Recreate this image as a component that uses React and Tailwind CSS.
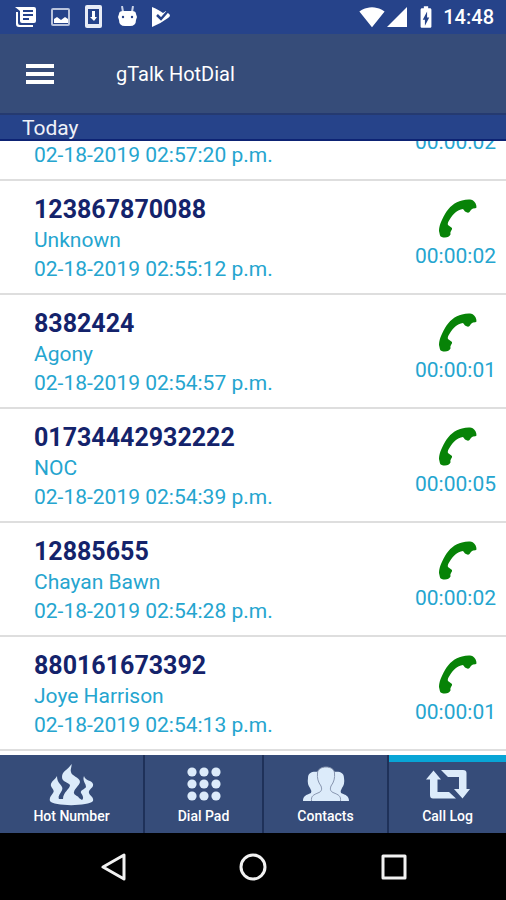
import React from 'react';
import {
    MdBatteryChargingFull,
    MdSignalCellular4Bar,
    MdSignalWifi4Bar,
} from 'react-icons/md';

const calls = [
    { id: 1, number: '', name: '', time: '02-18-2019 02:57:20 p.m.', duration: '00:00:02' },
    { id: 2, number: '123867870088', name: 'Unknown', time: '02-18-2019 02:55:12 p.m.', duration: '00:00:02' },
    { id: 3, number: '8382424', name: 'Agony', time: '02-18-2019 02:54:57 p.m.', duration: '00:00:01' },
    { id: 4, number: '01734442932222', name: 'NOC', time: '02-18-2019 02:54:39 p.m.', duration: '00:00:05' },
    { id: 5, number: '12885655', name: 'Chayan Bawn', time: '02-18-2019 02:54:28 p.m.', duration: '00:00:02' },
    { id: 6, number: '880161673392', name: 'Joye Harrison', time: '02-18-2019 02:54:13 p.m.', duration: '00:00:01' },
];

const NewsIcon = () => (
    <svg viewBox="0 0 22 22" className="h-[22px] w-[22px]" fill="currentColor">
        <path fillRule="evenodd" d="M0 1h19a2 2 0 0 1 2 2v12a2 2 0 0 1-2 2H7a2 2 0 0 1-2-2V5zM8 4v2h10V4zM8 8v2h10V8zM8 12v2h6v-2z" />
        <path d="M1 6h2v11a2 2 0 0 0 2 2h13v2H4a3 3 0 0 1-3-3z" />
    </svg>
);

const ImageIcon = () => (
    <svg viewBox="0 0 20 20" className="h-5 w-5">
        <rect x="1" y="2" width="17" height="16" rx="1" fill="none" stroke="#b9c3dc" strokeWidth="2" />
        <path d="M3 16v-4l3-2 4 3 4-3 3 2v4z" fill="#fff" />
    </svg>
);

const UpdateIcon = () => (
    <svg viewBox="0 0 18 24" className="h-6 w-[18px]">
        <rect x="0" y="0" width="17" height="23" rx="2" fill="#e8ecf6" />
        <rect x="3" y="4" width="11" height="15" fill="#26438a" />
        <path d="M7 6h3v6h2l-3 4-4-4h2z" fill="#fff" />
    </svg>
);

const AndroidIcon = () => (
    <svg viewBox="0 0 20 22" className="h-[22px] w-5">
        <path d="M5 0l1 6M16 0l-1 6" stroke="#c9d2e8" strokeWidth="2" />
        <path d="M2 8q0-3 4-3h9q4 0 4 3l1 3-1 3q0 6-6 6H8q-6 0-6-6l-1-3z" fill="#fff" />
        <circle cx="6" cy="11" r="1.2" fill="#26438a" />
        <circle cx="15" cy="11" r="1.2" fill="#26438a" />
    </svg>
);

const PlayCheckIcon = () => (
    <svg viewBox="0 0 20 22" className="h-[22px] w-5">
        <path d="M1 1q3 1 8 4l3 2 3-2 4 4q0 2-2 3Q9 18 1 21z" fill="#fff" />
        <path d="M6 9l4 4 7-8" fill="none" stroke="#26438a" strokeWidth="2.500" />
    </svg>
);

const PhoneIcon = () => (
    <svg viewBox="0 0 42 40" className="h-10 w-[42px]" fill="#078307">
        <path d="M4 32C4 27 6 22 10 15C14 8 20 3 27 1.500C31 .5 36 0 38 1.500C40 3 41.500 5 41.500 8.500Q41 9.500 38 9.500Q36 10 34.500 13Q33 14.500 30 12.500L28 10C22 11 18 15 15 20Q12 24 13 26L17 29Q17.500 30 16 32Q15 33 15.500 35.500Q14 38.500 10 38.500Q6 38.500 5 36.500Z" />
    </svg>
);

const FlameIcon = () => (
    <svg viewBox="0 0 46 44" className="h-11 w-[46px]" fill="#dcebfa">
        <path d="M22.500 2C19 8 13 9 13 15C13 20 19 20 21 23C21 27 14 30 14 37L10 37C8 33 15 29 13 25C12 22 8 21 8 14C6 18 1 20 2 24C3 27 6 28 4 31C2 34 0 36 1 39C4 44.500 40 44.500 44 39C45 35 41 34 40 31C39 27 45 26 44 22C43 18 36 19 35 14C33 19 37 21 37 25C35 28 31 28 32 31C34 34 35 36 33 38L30 36C30 34 24 33 25 30C26 26 30 24 31 20C31 15 22 14 22 10C21 7 23 5 22.500 2Z" />
    </svg>
);

const DialPadIcon = () => (
    <svg viewBox="0 0 36 44" className="h-11 w-9" fill="#dcebfa">
        {[10, 22, 34].map((cy) =>
            [6, 18, 30].map((cx) => <circle key={`${cx}-${cy}`} cx={cx} cy={cy} r="4.600" />)
        )}
    </svg>
);

const ContactsIcon = () => (
    <svg viewBox="0 0 46 44" className="h-11 w-[46px]" fill="#dcebfa">
        <path d="M0 39C0 34 3 33 8 31Q9 29 7 26Q4 22 5 16C5 10 10 9 16 10L23 39Z" />
        <path d="M46 39C46 34 43 33 38 31Q37 29 39 26Q42 22 41 16C41 10 36 9 30 10L23 39Z" />
        <path
            d="M8.500 39C8 34 10 33 16 30.500C19 29 19 27 18 24C15 20 14 16 14.500 11C15 3 31 3 31.500 11C32 16 31 20 28 24C27 27 27 29 30 30.500C36 33 38 34 37.500 39"
            stroke="#8795af"
        />
    </svg>
);

const CallLogIcon = () => (
    <svg viewBox="0 0 44 44" className="h-11 w-11" fill="#dcebfa">
        <path d="M7.500 8.500L15 17.500H11.500V30H23L30 36.500H7Q4 36.500 4 33V17.500H0Z" />
        <path d="M15 8H37Q40.500 8 40.500 11V27H44L36.500 36.500L28 27H33V15H22Z" />
    </svg>
);

const tabs = [
    { label: 'Hot Number', icon: FlameIcon },
    { label: 'Dial Pad', icon: DialPadIcon },
    { label: 'Contacts', icon: ContactsIcon },
    { label: 'Call Log', icon: CallLogIcon, active: true },
];

const StatusBar = () => (
    <div className="flex h-[34px] shrink-0 items-center justify-between bg-[#26438a] pr-3 pl-[15px] text-white">
        <div className="flex items-center gap-[14px]">
            <NewsIcon />
            <ImageIcon />
            <UpdateIcon />
            <AndroidIcon />
            <PlayCheckIcon />
        </div>
        <div className="flex items-center">
            <MdSignalWifi4Bar className="h-[26px] w-[26px]" />
            <MdSignalCellular4Bar className="h-6 w-6" />
            <MdBatteryChargingFull className="ml-1 h-[26px] w-[26px]" />
            <span className="ml-1 text-[20px] leading-6 font-medium">14:48</span>
        </div>
    </div>
);

const CallRow = ({ call }) => (
    <li className="flex h-[114px] items-start justify-between border-b-2 border-[#dedede] pr-[10px] pl-[34px]">
        <div className="pt-[13px] text-[21px] text-[#25a5cf]">
            <p className="h-8 text-[25px] leading-8 font-bold text-[#14236b]">{call.number}</p>
            <p className="h-[29px] leading-[29px]">{call.name}</p>
            <p className="h-[29px] leading-[29px]">{call.time}</p>
        </div>
        <div className="flex flex-col items-center pt-[18px]">
            <PhoneIcon />
            <p className="text-[21px] leading-[34px] text-[#25a5cf]">{call.duration}</p>
        </div>
    </li>
);

const App = () => {
    return (
        <div className="flex h-screen flex-col overflow-hidden bg-white font-['Roboto',sans-serif]">
            <StatusBar />

            <header className="flex h-[79px] shrink-0 items-center bg-[#364c79] px-[26px] text-white">
                <button type="button" aria-label="Menu" className="flex w-7 flex-col gap-1">
                    <span className="h-1 w-full bg-white" />
                    <span className="h-1 w-full bg-white" />
                    <span className="h-1 w-full bg-white" />
                </button>
                <h1 className="ml-[62px] text-[20px] leading-6">gTalk HotDial</h1>
            </header>

            <h2 className="h-7 shrink-0 border-t-2 border-b-2 border-t-[#253a70] border-b-[#0d2374] bg-[#26438a] pl-[22px] text-[21px] leading-[26px] text-[#eef1f8]">
                Today
            </h2>

            <main className="min-h-0 flex-1 overflow-hidden">
                {/* list is scrolled part way into the first call */}
                <ul className="-mt-[74px]">
                    {calls.map((call) => (
                        <CallRow key={call.id} call={call} />
                    ))}
                </ul>
            </main>

            <nav className="grid h-[78px] shrink-0 grid-cols-[145fr_119fr_125fr_117fr] bg-[#364c79]">
                {tabs.map(({ label, icon: Icon, active }) => (
                    <button
                        key={label}
                        type="button"
                        className={`flex flex-col items-center border-[#1f3159] text-[14px] leading-5 font-medium text-white ${
                            active ? 'border-t-[7px] border-t-[#08a5d6]' : 'border-r-2 pt-[7px]'
                        }`}
                    >
                        <Icon />
                        {label}
                    </button>
                ))}
            </nav>

            <div className="flex h-[67px] shrink-0 items-center justify-center gap-[112px] bg-black">
                <button type="button" aria-label="Back">
                    <svg viewBox="0 0 28 28" className="h-7 w-7" fill="none" stroke="#f2f2f2" strokeWidth="3" strokeLinejoin="round">
                        <path d="M4 14L25 2V26Z" />
                    </svg>
                </button>
                <button type="button" aria-label="Home">
                    <svg viewBox="0 0 28 28" className="h-7 w-7" fill="none" stroke="#f2f2f2" strokeWidth="3">
                        <circle cx="14" cy="14" r="12" />
                    </svg>
                </button>
                <button type="button" aria-label="Recent apps">
                    <svg viewBox="0 0 28 28" className="h-7 w-7" fill="none" stroke="#f2f2f2" strokeWidth="3" strokeLinejoin="round">
                        <rect x="4" y="3" width="22" height="22" />
                    </svg>
                </button>
            </div>
        </div>
    );
};

export default App;
